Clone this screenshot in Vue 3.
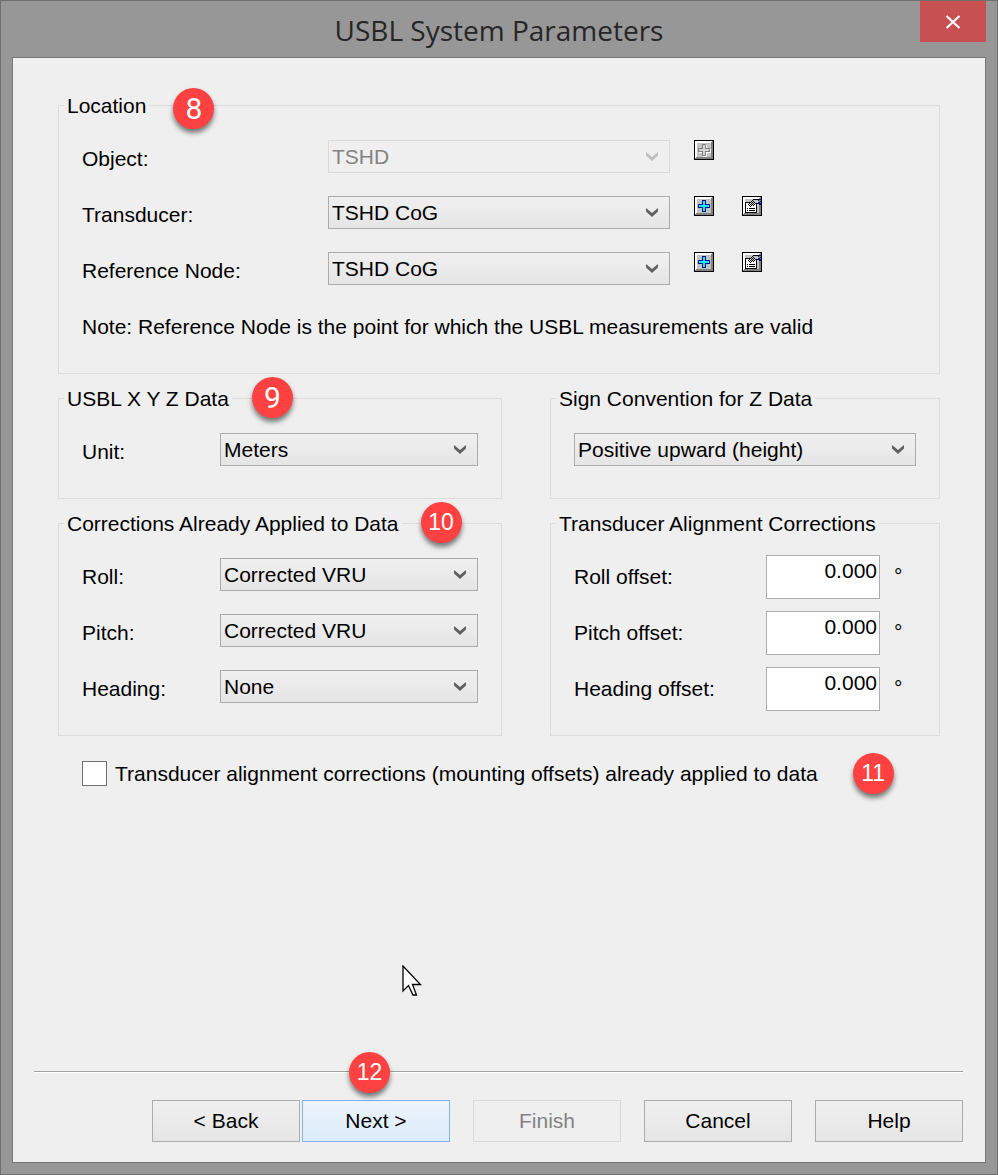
<script setup>
import { reactive, ref } from 'vue'

const location = reactive([
  { id: 'object', label: 'Object:', value: 'TSHD', disabled: true, properties: false },
  { id: 'transducer', label: 'Transducer:', value: 'TSHD CoG', disabled: false, properties: true },
  { id: 'reference', label: 'Reference Node:', value: 'TSHD CoG', disabled: false, properties: true }
])

const corrections = reactive([
  { id: 'roll', label: 'Roll:', value: 'Corrected VRU' },
  { id: 'pitch', label: 'Pitch:', value: 'Corrected VRU' },
  { id: 'heading', label: 'Heading:', value: 'None' }
])

const offsets = reactive([
  { id: 'roll-offset', label: 'Roll offset:', value: '0.000' },
  { id: 'pitch-offset', label: 'Pitch offset:', value: '0.000' },
  { id: 'heading-offset', label: 'Heading offset:', value: '0.000' }
])

const unit = ref('Meters')
const sign = ref('Positive upward (height)')
const applied = ref(false)
</script>

<template>
  <div class="window">
    <header class="titlebar">
      <h1 class="title">USBL System Parameters</h1>
      <button class="close" type="button" aria-label="Close">
        <svg width="16" height="14" viewBox="0 0 16 14"><path d="M1.500 1L14.500 13M14.500 1L1.500 13" stroke="#fff" stroke-width="2.200" fill="none" /></svg>
      </button>
    </header>

    <main class="client">
      <div class="groups">
        <fieldset class="group wide">
          <legend>Location<span class="badge b8">8</span></legend>
          <div class="rows">
            <div v-for="f in location" :key="f.id" class="row">
              <label class="label label-wide" :for="f.id">{{ f.label }}</label>
              <span class="combo combo-wide">
                <select :id="f.id" v-model="f.value" :disabled="f.disabled">
                  <option>{{ f.value }}</option>
                </select>
                <svg class="chevron" :class="{ dim: f.disabled }" width="12" height="9" viewBox="0 0 12 9"><path d="M0 0L6 5L12 0V3.500L6 9L0 3.500Z" /></svg>
              </span>
              <span class="tools">
                <button class="tool" type="button" :disabled="f.disabled" aria-label="Add">
                  <svg width="20" height="20" viewBox="0 0 20 20" shape-rendering="crispEdges">
                    <path fill="#000" d="M0 0h20v20H0z" />
                    <path fill="#808080" d="M1 1h18v18H1z" />
                    <path fill="#fff" d="M1 1h17v1h-1v1H3v14H2v1H1z" />
                    <path fill="#c3c3c3" d="M3 3h14v14H3z" />
                    <g v-if="f.disabled">
                      <path fill="#fff" d="M9 5h4v4h4v4h-4v4H9v-4H5V9h4z" />
                      <path fill="#808080" d="M8 4h4v4h4v4h-4v4H8v-4H4V8h4z" />
                      <path fill="#d4d4d4" d="M9 5h2v4h4v2h-4v4H9v-4H5V9h4z" />
                    </g>
                    <g v-else>
                      <path fill="#0a0a96" d="M8 4h4v4h4v4h-4v4H8v-4H4V8h4z" />
                      <path fill="#00f4ff" d="M9 5h2v4h4v2h-4v4H9v-4H5V9h4z" />
                    </g>
                  </svg>
                </button>
                <button v-if="f.properties" class="tool" type="button" aria-label="Properties">
                  <svg width="20" height="20" viewBox="0 0 20 20" shape-rendering="crispEdges">
                    <path fill="#000" d="M0 0h20v20H0z" />
                    <path fill="#808080" d="M1 1h18v18H1z" />
                    <path fill="#fff" d="M1 1h17v1h-1v1H3v14H2v1H1z" />
                    <path fill="#c3c3c3" d="M3 3h14v14H3z" />
                    <path fill="#000" d="M3 6h12v11H3z" />
                    <path fill="#fff" d="M4 7h10v9H4z" />
                    <path fill="#000" d="M5 12h1v1H5zM7 12h6v1H7zM5 14h1v1H5zM7 14h6v1H7z" />
                    <path fill="#c3c3c3" d="M11 4h6v3h-5v2H9V7z" />
                    <path fill="#000" d="M11 3h6v1h-6zM10 4h1v1h-1zM9 5h1v1H9zM8 6h1v1H8zM7 7h1v1H7zM6 8h1v1H6zM7 9h1v1H7zM8 8h1v1H8zM9 7h1v1H9zM10 6h1v1h-1zM11 5h1v1h-1zM12 6h1v1h-1zM11 7h1v1h-1zM10 8h1v1h-1zM9 9h1v1H9zM8 10h1v1H8zM12 8h1v1h-1zM13 7h4v1h-4zM11 9h1v1h-1z" />
                    <path fill="#0a0a96" d="M17 3h2v1h-2zM16 4h1v1h-1zM18 5h1v1h-1zM16 6h2v1h-2zM17 7h2v2h-2z" />
                  </svg>
                </button>
              </span>
            </div>
          </div>
          <p class="note">Note: Reference Node is the point for which the USBL measurements are valid</p>
        </fieldset>

        <fieldset class="group">
          <legend>USBL X Y Z Data<span class="badge b9">9</span></legend>
          <div class="rows">
            <div class="row">
              <label class="label" for="unit">Unit:</label>
              <span class="combo">
                <select id="unit" v-model="unit"><option>Meters</option></select>
                <svg class="chevron" width="12" height="9" viewBox="0 0 12 9"><path d="M0 0L6 5L12 0V3.500L6 9L0 3.500Z" /></svg>
              </span>
            </div>
          </div>
        </fieldset>

        <fieldset class="group">
          <legend id="sign-title">Sign Convention for Z Data</legend>
          <div class="rows">
            <div class="row">
              <span class="combo">
                <select v-model="sign" aria-labelledby="sign-title"><option>Positive upward (height)</option></select>
                <svg class="chevron" width="12" height="9" viewBox="0 0 12 9"><path d="M0 0L6 5L12 0V3.500L6 9L0 3.500Z" /></svg>
              </span>
            </div>
          </div>
        </fieldset>

        <fieldset class="group">
          <legend>Corrections Already Applied to Data<span class="badge two b10">10</span></legend>
          <div class="rows">
            <div v-for="c in corrections" :key="c.id" class="row">
              <label class="label" :for="c.id">{{ c.label }}</label>
              <span class="combo">
                <select :id="c.id" v-model="c.value"><option>{{ c.value }}</option></select>
                <svg class="chevron" width="12" height="9" viewBox="0 0 12 9"><path d="M0 0L6 5L12 0V3.500L6 9L0 3.500Z" /></svg>
              </span>
            </div>
          </div>
        </fieldset>

        <fieldset class="group">
          <legend>Transducer Alignment Corrections</legend>
          <div class="rows">
            <div v-for="o in offsets" :key="o.id" class="row">
              <label class="label offset-label" :for="o.id">{{ o.label }}</label>
              <input :id="o.id" v-model="o.value" class="number" type="text">
              <span class="degree">°</span>
            </div>
          </div>
        </fieldset>
      </div>

      <div class="applied">
        <input id="applied" v-model="applied" type="checkbox">
        <label for="applied">Transducer alignment corrections (mounting offsets) already applied to data</label>
        <span class="badge two inline">11</span>
      </div>

      <svg class="cursor" width="20" height="32" viewBox="0 0 20 32"><path d="M1 1V26L6.500 20.500L11 30H14.500L10.500 19.500H18.500Z" fill="#fff" stroke="#000" stroke-width="1.300" /></svg>

      <footer class="footer">
        <span class="badge two b12">12</span>
        <div class="pair">
          <button class="btn" type="button">&lt; Back</button>
          <button class="btn primary" type="button">Next &gt;</button>
        </div>
        <button class="btn" type="button" disabled>Finish</button>
        <button class="btn" type="button">Cancel</button>
        <button class="btn" type="button">Help</button>
      </footer>
    </main>
  </div>
</template>

<style>
body {
  margin: 0;
  background: #979797;
}
</style>

<style scoped>
* {
  box-sizing: border-box;
}

.window {
  display: flex;
  flex-direction: column;
  min-height: 100vh;
  padding: 0 11px 11px;
  border: 1px solid #6f6f6f;
  background: #979797;
  color: #000;
  font: 21px/24px "Liberation Sans", Arial, sans-serif;
}

.titlebar {
  position: relative;
  display: flex;
  justify-content: center;
  height: 56px;
}

.title {
  margin: 0;
  color: #262626;
  font: 400 28px/58px "Open Sans", "Segoe UI", sans-serif;
}

.close {
  position: absolute;
  top: 0;
  right: 0;
  display: grid;
  place-items: center;
  width: 66px;
  height: 41px;
  padding: 0;
  border: 0;
  background: #c75050;
}

.client {
  position: relative;
  display: flex;
  flex: 1;
  flex-direction: column;
  padding: 34px 22px 20px 21px;
  border: 1px solid #777;
  background: #efefef;
}

.groups {
  display: grid;
  grid-template-columns: 444fr 390fr;
  column-gap: 48px;
  padding: 0 23px 0 24px;
}

.group {
  min-width: 0;
  margin: 0 0 11px;
  padding: 0 23px 32px;
  border: 1px solid #dcdcdc;
}

.wide {
  grid-column: 1 / -1;
}

legend {
  position: relative;
  margin-left: -18px;
  padding: 2px 3px 0;
}

.rows {
  display: grid;
  gap: 23px;
  margin-top: 22px;
}

.row {
  display: flex;
  height: 33px;
}

.label {
  flex: none;
  width: 138px;
  padding-top: 7px;
}

.label-wide {
  width: 246px;
}

.combo {
  position: relative;
  flex: 1;
}

.combo-wide {
  flex: 0 1 342px;
}

select {
  display: block;
  width: 100%;
  height: 33px;
  padding: 0 32px 0 3px;
  border: 1px solid #acacac;
  border-radius: 0;
  background: linear-gradient(#f0f0f0, #e5e5e5);
  color: #000;
  font: inherit;
  appearance: none;
}

select:disabled {
  border-color: #d9d9d9;
  background: #efefef;
  color: #838383;
  opacity: 1;
}

.chevron {
  position: absolute;
  top: 12px;
  right: 12px;
  fill: #606060;
  pointer-events: none;
}

.dim {
  fill: #bfbfbf;
}

.tools {
  display: flex;
  gap: 28px;
  margin-left: 24px;
}

.tool {
  width: 20px;
  height: 20px;
  padding: 0;
  border: 0;
  background: none;
}

.tool svg {
  display: block;
}

.note {
  margin: 30px 0 2px;
}

.offset-label {
  width: 192px;
}

.number {
  flex: none;
  width: 114px;
  height: 44px;
  margin-top: -3px;
  padding: 3px 2px 15px;
  border: 1px solid #abadb3;
  background: #fff;
  color: #000;
  font: inherit;
  text-align: right;
}

.degree {
  padding: 6px 0 0 14px;
}

.applied {
  position: relative;
  display: flex;
  align-items: center;
  height: 41px;
  margin-top: 6px;
  padding-left: 48px;
}

.applied input {
  width: 25px;
  height: 25px;
  margin: 0 8px 0 0;
  border: 1px solid #707070;
  background: #fff;
  appearance: none;
}

.applied input:checked {
  background: #606060;
}

.badge {
  position: absolute;
  top: -8px;
  display: grid;
  place-items: center;
  width: 41px;
  height: 41px;
  border-radius: 50%;
  background: #ff4141;
  box-shadow: 0 4px 5px rgba(0, 0, 0, 0.5);
  color: #fff;
  font: 400 30px/41px Roboto, sans-serif;
}

.two {
  font: 400 23px/41px "Liberation Sans", Arial, sans-serif;
}

.b8 {
  top: -4px;
  left: calc(100% + 24px);
}

.b9 {
  left: calc(100% + 20px);
}

.b10 {
  left: calc(100% + 19px);
}

.inline {
  position: static;
  margin-left: 35px;
}

.cursor {
  position: absolute;
  top: 907px;
  left: 389px;
}

.footer {
  position: relative;
  display: flex;
  justify-content: flex-end;
  gap: 23px;
  margin-top: auto;
  padding-top: 28px;
  border-top: 1px solid #a0a0a0;
  box-shadow: inset 0 1px #fff;
}

.b12 {
  top: -20px;
  right: 573px;
}

.pair {
  display: flex;
  gap: 2px;
}

.btn {
  width: 148px;
  height: 42px;
  padding: 0;
  border: 1px solid #acacac;
  background: linear-gradient(#f0f0f0, #e5e5e5);
  color: #000;
  font: inherit;
}

.primary {
  border-color: #7eb4ea;
  background: linear-gradient(#ecf4fc, #dcecfa);
}

.btn:disabled {
  border-color: #d9d9d9;
  background: #efefef;
  color: #838383;
}
</style>
